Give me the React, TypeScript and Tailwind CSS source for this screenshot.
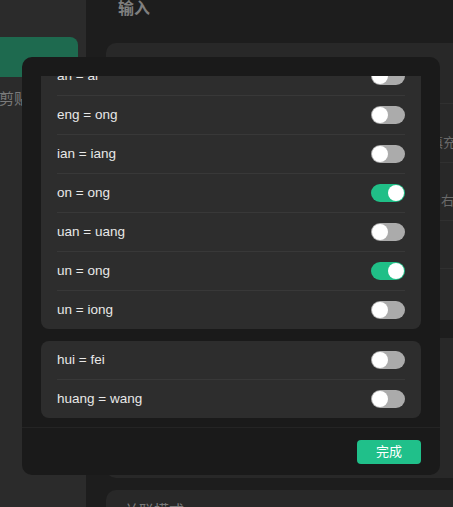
import React from "react";

type Rule = { label: string; on: boolean };

const groupA: Rule[] = [
  { label: "an = ai", on: false },
  { label: "eng = ong", on: false },
  { label: "ian = iang", on: false },
  { label: "on = ong", on: true },
  { label: "uan = uang", on: false },
  { label: "un = ong", on: true },
  { label: "un = iong", on: false },
];

const groupB: Rule[] = [
  { label: "hui = fei", on: false },
  { label: "huang = wang", on: false },
];

const Toggle = ({ on }: { on: boolean }) => (
  <div
    className={`w-[34px] h-[18px] rounded-full p-px flex ${
      on ? "bg-[#20bf87] justify-end" : "bg-[#ababab] justify-start"
    }`}
  >
    <div className="w-4 h-4 rounded-full bg-white" />
  </div>
);

const RuleCard = ({ rules }: { rules: Rule[] }) => (
  <div className="bg-[#2d2d2d] rounded-[8px]">
    {rules.map((r, i) => (
      <React.Fragment key={r.label + i}>
        {i > 0 && <div className="mx-4 h-px bg-[#383838]" />}
        <div className="h-[38px] px-4 flex items-center justify-between">
          <span className="text-[13.5px] text-[#e8e8e8] pt-px">{r.label}</span>
          <Toggle on={r.on} />
        </div>
      </React.Fragment>
    ))}
  </div>
);

export default function App() {
  return (
    <div
      className="relative w-[453px] h-[507px] overflow-hidden flex bg-[#1d1d1d]"
      style={{ fontFamily: '"Liberation Sans", "Noto Sans CJK SC", sans-serif' }}
    >
      {/* sidebar */}
      <div className="w-[86px] shrink-0 bg-[#2b2b2b] flex flex-col">
        <div className="shrink-0 mt-[37px] h-[40px] w-[78px] rounded-r-[8px] bg-[#1e6a4f]" />
        <div className="shrink-0 mt-[11px] -ml-px text-[15px] text-[#7a7a7a]">剪贴板</div>
      </div>

      {/* main */}
      <div className="flex-1 flex flex-col pl-[20px]">
        <div className="shrink-0 pl-[12px] h-[43px] leading-[18px] text-[16px] font-bold text-[#7f7f7f]">输入</div>
        <div className="shrink-0 w-[400px] bg-[#282828] rounded-[10px] flex flex-col">
          <div className="h-[60px]" />
          <div className="h-[59px] border-t border-[#303030] pl-[298px] pt-[29px] text-[13px] text-[#6a6a6a]">
            自动填充
          </div>
          <div className="h-[58px] border-t border-[#303030] pl-[335px] pt-[28px] text-[13px] text-[#6a6a6a]">
            右Shift
          </div>
          <div className="h-[48px] border-t border-[#303030]" />
          <div className="h-[52px] border-t border-[#303030]" />
        </div>
        <div className="shrink-0 mt-[18px] w-[400px] h-[140px] bg-[#282828] rounded-[10px]" />
        <div className="shrink-0 mt-[12px] w-[400px] h-[40px] bg-[#282828] rounded-t-[10px] pl-[18px] pt-[10px] text-[15px] text-[#7a7a7a]">
          关联模式
        </div>
      </div>

      {/* modal */}
      <div className="absolute left-[22px] top-[57px] w-[418px] h-[418px] bg-[#1a1a1a] rounded-[10px] flex flex-col">
        <div className="h-[370px] pt-[19px] flex flex-col">
          <div className="flex-1 overflow-hidden px-[19px]">
            <div className="-mt-[19px] flex flex-col gap-3">
              <RuleCard rules={groupA} />
              <RuleCard rules={groupB} />
            </div>
          </div>
        </div>
        <div className="flex-1 border-t border-[#242424] flex justify-end pt-3 pr-[19px]">
          <button className="w-16 h-6 rounded-[4px] bg-[#20c08a] text-white text-[13px]">完成</button>
        </div>
      </div>
    </div>
  );
}
